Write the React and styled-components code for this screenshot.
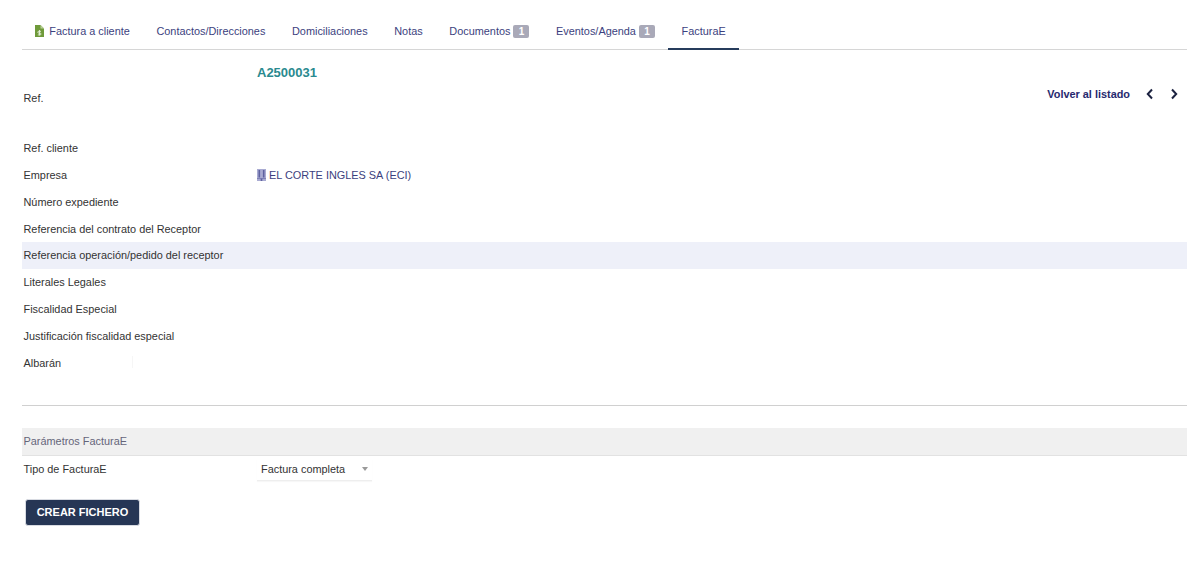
import React from "react";
import styled, { createGlobalStyle } from "styled-components";

const Global = createGlobalStyle`
  html, body { margin: 0; padding: 0; background: #fff; }
  body { font-family: "Liberation Sans", Arial, sans-serif; font-size: 10.9px; color: #333; }
`;
const Page = styled.div`
  width: 1165px;
  margin-left: 22px;
  padding-top: 13px;
`;
const Tabs = styled.nav`
  display: flex;
  height: 36px;
  border-bottom: 1px solid #d6d6d6;
`;
const Tab = styled.a`
  display: flex;
  align-items: center;
  gap: 3px;
  height: 37px;
  box-sizing: border-box;
  padding: 1px 13.3px 0;
  font-size: 10.9px;
  color: #3c3f7e;
  border-bottom: 2px solid ${p => (p.$active ? "#263c5c" : "transparent")};
`;
const TabIcon = styled.span`
  display: flex;
  margin-right: 2px;
`;
const Badge = styled.span`
  display: inline-block;
  width: 16px;
  height: 13px;
  line-height: 13px;
  border-radius: 2px;
  background: #a9a9b8;
  color: #fff;
  font-size: 10px;
  font-weight: 700;
  text-align: center;
`;
const RefBlock = styled.div`
  position: relative;
  height: 84px;
`;
const RefValue = styled.div`
  padding: 15px 0 0 235px;
  font-size: 13px;
  line-height: 16px;
  font-weight: 700;
  color: #2a8a8f;
`;
const RefLabel = styled.div`
  padding: 10px 0 0 1.5px;
  line-height: 15px;
  color: #333;
`;
const Nav = styled.div`
  position: absolute;
  right: 8px;
  top: 36px;
  display: flex;
  align-items: center;
  height: 16px;
  font-weight: 700;
  font-size: 10.9px;
  color: #27296e;
`;
const Chevron = styled.svg`
  width: 10px;
  height: 12px;
  margin-left: 14px;
  &:first-of-type { margin-left: 15px; }
`;
const Rows = styled.div`
  padding-top: 0.6px;
  height: 241.6px;
`;
const Row = styled.div`
  position: relative;
  display: flex;
  align-items: center;
  height: 26.85px;
  padding-left: 1.5px;
  background: ${p => (p.$hl ? "#eef0f9" : "transparent")};
`;
const Label = styled.div`
  width: 233.5px;
  flex: none;
`;
const Company = styled.a`
  display: flex;
  align-items: center;
  gap: 3px;
  color: #3c3f7e;
`;
const Caret2 = styled.span`
  position: absolute;
  left: 110px;
  top: 7px;
  width: 1px;
  height: 12px;
  background: #f6f6f6;
`;
const Divider = styled.hr`
  margin: 29px 0 0;
  border: 0;
  border-top: 1px solid #d0d0d0;
  height: 0;
`;
const Section = styled.div`
  margin-top: 22px;
  height: 27px;
  line-height: 26px;
  padding-left: 1.5px;
  background: #f0f0f0;
  border-bottom: 1px solid #e2e2e2;
  color: #65657a;
`;
const SelectRow = styled.div`
  display: flex;
  align-items: center;
  height: 26px;
  padding-left: 1.5px;
`;
const Select = styled.div`
  display: flex;
  align-items: center;
  justify-content: space-between;
  width: 115px;
  height: 22px;
  box-sizing: border-box;
  padding: 0 7px 0 4px;
  margin-top: 1px;
  border-bottom: 1px solid #eeeeee;
  box-shadow: 0 1px 1px rgba(0, 0, 0, 0.03);
  color: #333;
`;
const Caret = styled.span`
  width: 0;
  height: 0;
  margin-right: -3px;
  border-left: 3.5px solid transparent;
  border-right: 3.5px solid transparent;
  border-top: 4px solid #9a9a9a;
`;
const Button = styled.button`
  display: block;
  margin: 17px 0 0 3px;
  width: 115px;
  height: 27px;
  padding: 0 0 2px;
  border: 1px solid #d8dbe2;
  border-radius: 3px;
  background: #263655;
  color: #fff;
  font-family: inherit;
  font-size: 11px;
  font-weight: 700;
`;
const InvoiceIcon = () => (
  <svg width="9" height="12" viewBox="0 0 9 12">
    <path d="M0 0h5.5L9 3.5V12H0z" fill="#6f9a3a" />
    <path d="M5.5 0v3.5H9z" fill="#b8cf96" />
    <path d="M4.5 5v5.4M6 6.3H3.7a.9.9 0 0 0 0 1.8h1.4a.9.9 0 0 1 0 1.8H2.8" stroke="#e8f0dc" strokeWidth=".9" fill="none" />
  </svg>
);
const BuildingIcon = () => (
  <svg width="9" height="12" viewBox="0 0 9 12">
    <path d="M0 0h9v12H0z" fill="#a9abd2" />
    <path d="M1.5 1h1.6v7.5H1.5zM5.9 1h1.6v7.5H5.9zM3.7 9h1.6v3H3.7z" fill="#5f62a0" />
    <path d="M0 9h9v.8H0z" fill="#7679b0" />
  </svg>
);
const labels = [
  "Ref. cliente",
  "Empresa",
  "Número expediente",
  "Referencia del contrato del Receptor",
  "Referencia operación/pedido del receptor",
  "Literales Legales",
  "Fiscalidad Especial",
  "Justificación fiscalidad especial",
  "Albarán",
];
export default function App() {
  return (
    <>
      <Global />
      <Page>
        <Tabs>
          <Tab><TabIcon><InvoiceIcon /></TabIcon>Factura a cliente</Tab>
          <Tab>Contactos/Direcciones</Tab>
          <Tab>Domiciliaciones</Tab>
          <Tab>Notas</Tab>
          <Tab>Documentos<Badge>1</Badge></Tab>
          <Tab>Eventos/Agenda<Badge>1</Badge></Tab>
          <Tab $active>FacturaE</Tab>
        </Tabs>
        <RefBlock>
          <RefValue>A2500031</RefValue>
          <RefLabel>Ref.</RefLabel>
          <Nav>
            Volver al listado
            <Chevron viewBox="0 0 10 12"><path d="M7 1.5 2.8 6 7 10.5" fill="none" stroke="#1c2240" strokeWidth="2" /></Chevron>
            <Chevron viewBox="0 0 10 12"><path d="M3 1.5 7.2 6 3 10.5" fill="none" stroke="#1c2240" strokeWidth="2" /></Chevron>
          </Nav>
        </RefBlock>
        <Rows>
          {labels.map((l, i) => (
            <Row key={l} $hl={i === 4}>
              <Label>{l}</Label>
              {i === 1 && <Company><BuildingIcon />EL CORTE INGLES SA (ECI)</Company>}
              {i === 8 && <Caret2 />}
            </Row>
          ))}
        </Rows>
        <Divider />
        <Section>Parámetros FacturaE</Section>
        <SelectRow>
          <Label>Tipo de FacturaE</Label>
          <Select>Factura completa<Caret /></Select>
        </SelectRow>
        <Button>CREAR FICHERO</Button>
      </Page>
    </>
  );
}
